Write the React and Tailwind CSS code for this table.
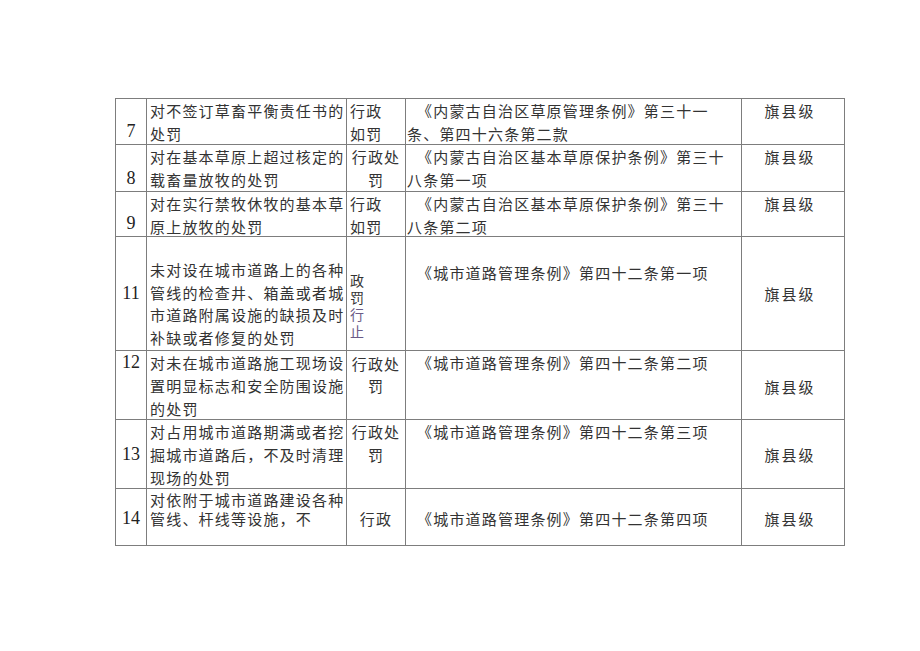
import React from "react";

const cjk = { fontFamily: '"Noto Sans CJK SC", "Noto Sans CJK JP", sans-serif' };

// inner heights: row height minus the 1px border
const rows = [
  {
    no: "7",
    h: "h-[45px]",
    noCls: "justify-end pb-[1px]",
    desc: ["对不签订草畜平衡责任书的", "处罚"],
    descCls: "justify-start",
    type: ["行政", "如罚"],
    typeCls: "justify-start items-start pl-[3px]",
    basis: ["《内蒙古自治区草原管理条例》第三十一", "条、第四十六条第二款"],
    basisCls: "justify-start",
    levelCls: "justify-start",
  },
  {
    no: "8",
    h: "h-[46px]",
    noCls: "justify-end pb-[1px]",
    desc: ["对在基本草原上超过核定的", "载畜量放牧的处罚"],
    descCls: "justify-start",
    type: ["行政处", "罚"],
    typeCls: "justify-start items-center",
    basis: ["《内蒙古自治区基本草原保护条例》第三十", "八条第一项"],
    basisCls: "justify-start",
    levelCls: "justify-start",
  },
  {
    no: "9",
    h: "h-[44px]",
    noCls: "justify-end pb-[1px]",
    desc: ["对在实行禁牧休牧的基本草", "原上放牧的处罚"],
    descCls: "justify-start",
    type: ["行政", "如罚"],
    typeCls: "justify-start items-start pl-[3px]",
    basis: ["《内蒙古自治区基本草原保护条例》第三十", "八条第二项"],
    basisCls: "justify-start",
    levelCls: "justify-start",
  },
  {
    no: "11",
    h: "h-[113px]",
    noCls: "justify-center",
    desc: ["未对设在城市道路上的各种", "管线的检查井、箱盖或者城", "市道路附属设施的缺损及时", "补缺或者修复的处罚"],
    descCls: "justify-start pt-[22px] leading-[22.5px]",
    type: null,
    basis: ["《城市道路管理条例》第四十二条第一项"],
    basisCls: "justify-start pt-[24px]",
    levelCls: "justify-center",
  },
  {
    no: "12",
    h: "h-[68px]",
    noCls: "justify-start",
    desc: ["对未在城市道路施工现场设", "置明显标志和安全防围设施", "的处罚"],
    descCls: "justify-start",
    type: ["行政处", "罚"],
    typeCls: "justify-start items-center pt-[2px] leading-[22px]",
    basis: ["《城市道路管理条例》第四十二条第二项"],
    basisCls: "justify-start",
    levelCls: "justify-center pt-[2px]",
  },
  {
    no: "13",
    h: "h-[68px]",
    noCls: "justify-center",
    desc: ["对占用城市道路期满或者挖", "掘城市道路后，不及时清理", "现场的处罚"],
    descCls: "justify-start",
    type: ["行政处", "罚"],
    typeCls: "justify-start items-center",
    basis: ["《城市道路管理条例》第四十二条第三项"],
    basisCls: "justify-start",
    levelCls: "justify-center",
  },
  {
    no: "14",
    h: "h-[56px]",
    noCls: "justify-center pt-[2px]",
    desc: ["对依附于城市道路建设各种", "管线、杆线等设施，不"],
    descCls: "justify-start pt-[1px] leading-[19px]",
    type: ["行政"],
    typeCls: "justify-center items-center pt-[2px]",
    basis: ["《城市道路管理条例》第四十二条第四项"],
    basisCls: "justify-center pt-[2px]",
    levelCls: "justify-center pt-[2px]",
  },
];

const cell = "border border-[#7d7d7d] p-0 align-top";

export default function App() {
  return (
    <div className="min-h-[651px] bg-white pt-[98px] pl-[115px]">
      <table
        className="table-fixed border-collapse w-[729px] text-[15px] leading-[23px] tracking-[1.2px] text-[#333]"
        style={cjk}
      >
        <colgroup>
          <col className="w-[31px]" />
          <col className="w-[200px]" />
          <col className="w-[59px]" />
          <col className="w-[336px]" />
          <col className="w-[103px]" />
        </colgroup>
        <tbody>
          {rows.map((r) => (
            <tr key={r.no}>
              <td className={cell}>
                <div
                  className={`flex flex-col items-center overflow-hidden text-[18px] tracking-normal text-[#222] ${r.h} ${r.noCls}`}
                  style={{ fontFamily: '"Liberation Serif", serif' }}
                >
                  {r.no}
                </div>
              </td>
              <td className={cell}>
                <div className={`flex flex-col overflow-hidden pl-[3px] ${r.h} ${r.descCls}`}>
                  {r.desc.map((t, i) => (
                    <div key={i} className="whitespace-nowrap">
                      {t}
                    </div>
                  ))}
                </div>
              </td>
              <td className={cell}>
                {r.type ? (
                  <div className={`flex flex-col overflow-hidden ${r.h} ${r.typeCls}`}>
                    {r.type.map((t, i) => (
                      <div key={i} className="whitespace-nowrap">
                        {t}
                      </div>
                    ))}
                  </div>
                ) : (
                  <div className={`flex flex-col overflow-hidden pl-[3px] pt-[35px] text-[14px] leading-[17px] ${r.h}`}>
                    <div>政</div>
                    <div>罚</div>
                    <div className="text-[#6a5a86]">行</div>
                    <div className="text-[#6a5a86]">止</div>
                  </div>
                )}
              </td>
              <td className={cell}>
                <div className={`flex flex-col overflow-hidden pl-[1px] ${r.h} ${r.basisCls}`}>
                  {r.basis.map((t, i) => (
                    <div key={i} className={i === 0 ? "whitespace-nowrap pl-[10px]" : "whitespace-nowrap"}>
                      {t}
                    </div>
                  ))}
                </div>
              </td>
              <td className={cell}>
                <div
                  className={`flex flex-col items-center overflow-hidden pr-[6px] tracking-[2px] ${r.h} ${r.levelCls}`}
                >
                  旗县级
                </div>
              </td>
            </tr>
          ))}
        </tbody>
      </table>
    </div>
  );
}
